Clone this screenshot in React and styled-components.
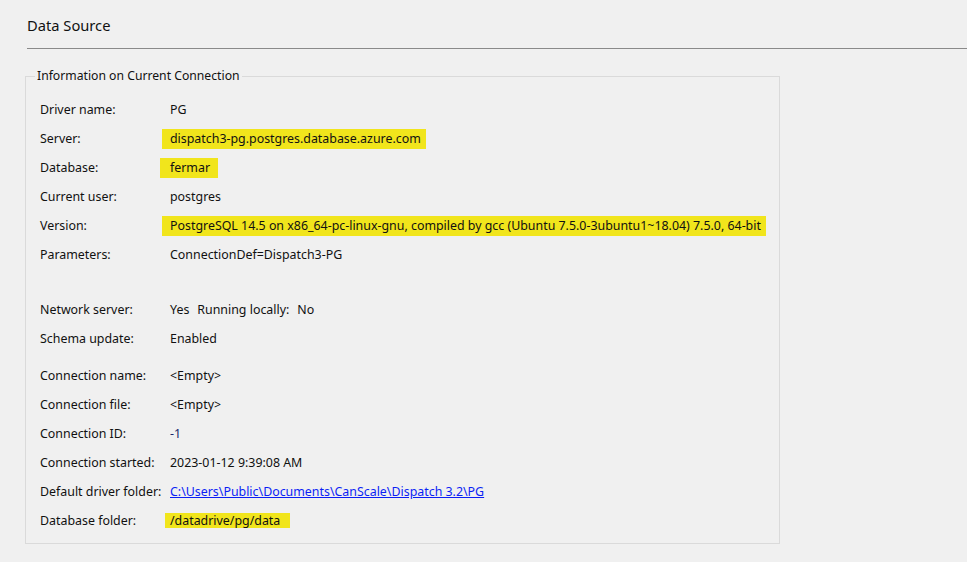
import React from 'react'
import styled, { createGlobalStyle } from 'styled-components'

const GlobalStyle = createGlobalStyle`
  html, body {
    margin: 0;
    padding: 0;
    background: #f0f0f0;
  }
  body {
    font-family: "Noto Sans", "Liberation Sans", sans-serif;
    color: #111;
    overflow: hidden;
  }
`

const Page = styled.main`
  width: 967px;
  height: 562px;
  background: #f0f0f0;
`

const Header = styled.header`
  margin-left: 27px;
  height: 49px;
  box-sizing: border-box;
  padding-top: 15px;
  border-bottom: 1px solid #8a8a8a;
`

const Title = styled.h1`
  margin: 0;
  font-size: 14.7px;
  font-weight: 400;
  line-height: 20px;
  color: #111;
`

const Box = styled.fieldset`
  box-sizing: border-box;
  width: 755px;
  margin: 19px 0 0 25px;
  padding: 11px 0 8px 14px;
  border: 1px solid #dadada;
  min-width: 0;
`

const Legend = styled.legend`
  margin-left: -5px;
  padding: 0 2px;
  font-size: 12.2px;
  line-height: 16px;
  color: #111;
`

const Section = styled.div`
  margin-top: ${p => p.$gap || 0}px;
`

const Row = styled.div`
  display: grid;
  grid-template-columns: 130px 1fr;
  align-items: center;
  height: 29px;
  font-size: 12.4px;
  white-space: nowrap;
`

const Label = styled.span`
  color: #111;
`

const Value = styled.span`
  display: flex;
  align-items: center;
  gap: ${p => p.$gap || 0}px;
  color: ${p => p.$color || '#111'};
`

const Mark = styled.span`
  display: inline-block;
  background: #f1e51c;
  line-height: ${p => p.$h || 20}px;
  padding: 0 ${p => p.$r}px 0 ${p => p.$l}px;
  margin-left: -${p => p.$l}px;
`

const Link = styled.a`
  color: #0b1ff5;
  text-decoration: underline;
  cursor: pointer;
`

const Info = ({ label, children, color, gap }) => (
  <Row>
    <Label>{label}</Label>
    <Value $color={color} $gap={gap}>{children}</Value>
  </Row>
)

export default function App() {
  return (
    <Page>
      <GlobalStyle />
      <Header>
        <Title>Data Source</Title>
      </Header>
      <Box>
        <Legend>Information on Current Connection</Legend>
        <Section>
          <Info label="Driver name:">PG</Info>
          <Info label="Server:">
            <Mark $l={8} $r={5}>dispatch3-pg.postgres.database.azure.com</Mark>
          </Info>
          <Info label="Database:">
            <Mark $l={10} $r={8}>fermar</Mark>
          </Info>
          <Info label="Current user:">postgres</Info>
          <Info label="Version:">
            <Mark $l={8} $r={5}>PostgreSQL 14.5 on x86_64-pc-linux-gnu, compiled by gcc (Ubuntu 7.5.0-3ubuntu1~18.04) 7.5.0, 64-bit</Mark>
          </Info>
          <Info label="Parameters:">ConnectionDef=Dispatch3-PG</Info>
        </Section>
        <Section $gap={26}>
          <Info label="Network server:" gap={8}>
            <span>Yes</span>
            <span>Running locally:</span>
            <span>No</span>
          </Info>
          <Info label="Schema update:">Enabled</Info>
        </Section>
        <Section $gap={8}>
          <Info label="Connection name:">&lt;Empty&gt;</Info>
          <Info label="Connection file:">&lt;Empty&gt;</Info>
          <Info label="Connection ID:" color="#1b2a6b">-1</Info>
          <Info label="Connection started:">2023-01-12 9:39:08 AM</Info>
          <Info label="Default driver folder:">
            <Link>C:\Users\Public\Documents\CanScale\Dispatch 3.2\PG</Link>
          </Info>
          <Info label="Database folder:">
            <Mark $l={5} $r={10} $h={15}>/datadrive/pg/data</Mark>
          </Info>
        </Section>
      </Box>
    </Page>
  )
}
